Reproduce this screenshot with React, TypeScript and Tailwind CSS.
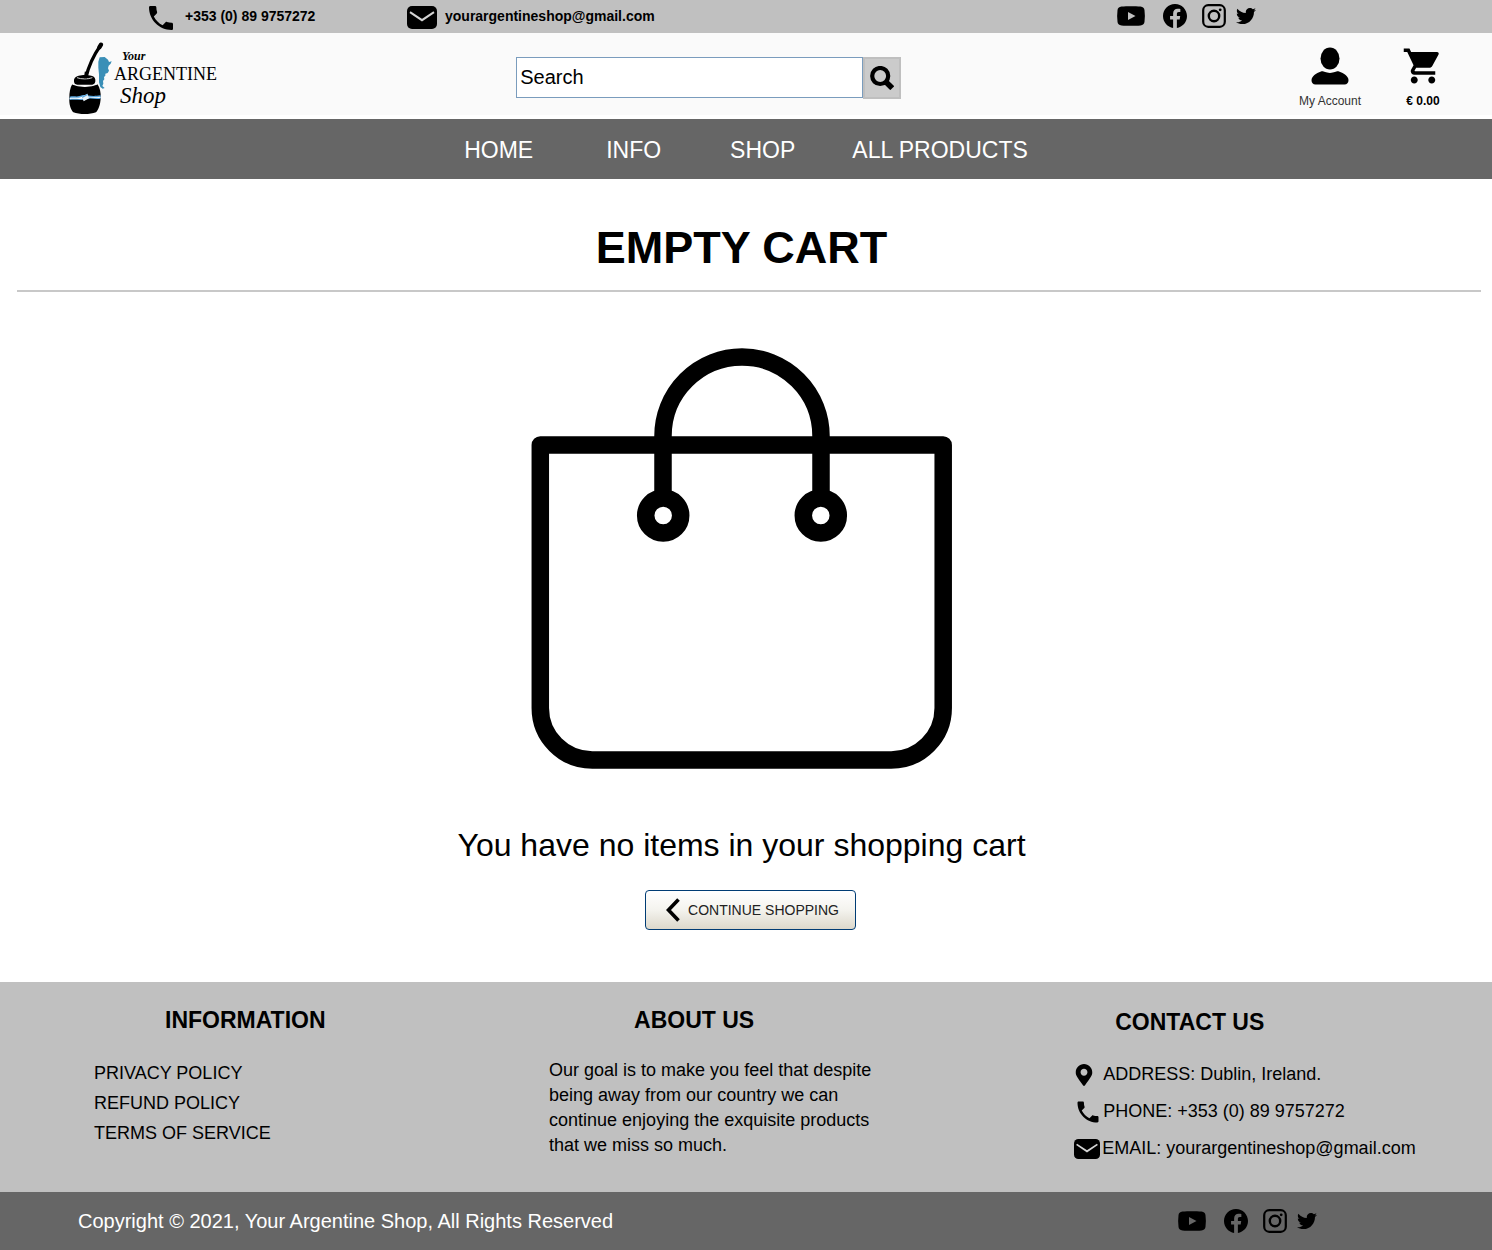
import React from "react";
import { BsFacebook } from "react-icons/bs";
import { FaMapMarkerAlt, FaTwitter } from "react-icons/fa";
import { MdPhone, MdShoppingCart } from "react-icons/md";

function YoutubeIcon() {
  return (
    <svg viewBox="0 0 28 20" className="h-5 w-7" aria-hidden="true">
      <path
        fillRule="evenodd"
        fill="currentColor"
        d="M4.500.6C10 0 18 0 23.500.6c2.600.3 3.800 1.600 4 3.700.5 3.800.5 7.600 0 11.400-.2 2.100-1.400 3.400-4 3.700-5.500.6-13.500.6-19 0-2.600-.3-3.800-1.600-4-3.700-.5-3.800-.5-7.600 0-11.400.2-2.100 1.400-3.400 4-3.700ZM11 6v8l7.500-4Z"
      />
    </svg>
  );
}

function InstagramIcon() {
  return (
    <svg viewBox="0 0 24 24" className="size-6" fill="none" stroke="currentColor" aria-hidden="true">
      <rect x="1.200" y="1.200" width="21.600" height="21.600" rx="5" strokeWidth="2.200" />
      <circle cx="12" cy="12" r="5.200" strokeWidth="2.400" />
      <circle cx="18.200" cy="5.800" r="1.400" fill="currentColor" stroke="none" />
    </svg>
  );
}

function MailIcon({ className }: { className: string }) {
  return (
    <svg viewBox="0 0 30 23" className={className} preserveAspectRatio="none" aria-hidden="true">
      <rect width="30" height="23" rx="5" fill="currentColor" />
      <path d="M3 6.200 15 14.200 27 6.200" fill="none" stroke="#d4d4d4" strokeWidth="2" />
    </svg>
  );
}

function SearchIcon() {
  return (
    <svg viewBox="0 0 24 24" className="size-6" fill="none" stroke="currentColor" aria-hidden="true">
      <circle cx="10.200" cy="10" r="8" strokeWidth="4.200" />
      <path d="m15.500 15.500 6.700 6.700" strokeWidth="5.500" />
    </svg>
  );
}

function PersonIcon() {
  return (
    <svg viewBox="0 0 38 38" className="size-[38px]" fill="#000" aria-hidden="true">
      <ellipse cx="19" cy="11.500" rx="9.500" ry="11" />
      <path d="M10 24.500c2.500-.8 4 1.400 9 1.400s6.500-2.200 9-1.400c5 1.600 9.500 5 9.500 8.700 0 2.500-1.500 4.300-4 4.300h-29C2 37.500.5 35.700.5 33.200c0-3.700 4.500-7.100 9.500-8.700Z" />
    </svg>
  );
}

function BagIcon() {
  return (
    <svg viewBox="0 0 421 421" className="size-[421px]" fill="none" stroke="currentColor" strokeWidth="17.500" aria-hidden="true">
      <path d="M9.300 97h402.900v263a52 52 0 0 1-52 52H61.300a52 52 0 0 1-52-52Z" strokeLinejoin="round" />
      <path d="M132 150V88a79 79 0 0 1 158 0v62" />
      <circle cx="132.200" cy="167.500" r="17.500" />
      <circle cx="289.800" cy="167.500" r="17.500" />
    </svg>
  );
}

function MateIcon() {
  return (
    <svg viewBox="24 12 138 225" className="h-[75px] w-[46px] shrink-0" aria-hidden="true">
      <path d="M123 23c-18 26-36 58-45 98" fill="none" stroke="#000" strokeWidth="10" strokeLinecap="round" />
      <path d="M123 23l-5 8" fill="none" stroke="#000" strokeWidth="13" strokeLinecap="round" />
      <path
        fill="#3a8fb7"
        d="M119 61 134 60 144 68 147 75 155 73 152 80 146 86 144 94 147 101 143 108 136 110 136 116 132 120 133 127 129 132 130 140 127 147 134 153 128 155 121 150 117 136 117 112 115 92 115 74Z"
      />
      <path d="M42 128c2-8 8-11 14-12 10-3 28-3 38 0 7 1 11 5 12 12 1 9-3 14-9 15H50c-6-1-9-7-8-15Z" />
      <path d="M51 122c12 5 34 5 46 0" fill="none" stroke="#fafafa" strokeWidth="2.500" />
      <path d="M79 104 76 124" fill="none" stroke="#000" strokeWidth="9" />
      <path d="M37 141c20 9 55 9 75 0 8 12 11 25 10 43-1 19-6 34-14 42-18 7-50 7-68 0-8-8-13-23-12-42 0-18 2-31 9-43Z" />
      <path d="M37 141c20 9 55 9 75 0" fill="none" stroke="#fafafa" strokeWidth="4" />
      <path d="M29 179c14-3 24 2 37-4 14-4 22 6 56 0v10c-18 4-30-4-42 2-16 4-34-1-51 2Z" fill="#5aa5dc" />
      <path d="M29 183c14-2 24 2 38-4 14-4 22 6 55 0v3c-22 4-34-4-46 2-16 4-30 0-47 2Z" fill="#fff" />
      <path d="m66 179 16-9 5 14-16 9Z" fill="#e7f2fa" />
      <path d="m66 179 16-9 1 4-16 9Z" fill="#5aa5dc" />
    </svg>
  );
}

function SocialLinks() {
  return (
    <div className="flex items-center text-black">
      <a href="#youtube" aria-label="YouTube" className="mr-[18px]">
        <YoutubeIcon />
      </a>
      <a href="#facebook" aria-label="Facebook" className="mr-[15px]">
        <BsFacebook className="size-6" />
      </a>
      <a href="#instagram" aria-label="Instagram" className="mr-2.5">
        <InstagramIcon />
      </a>
      <a href="#twitter" aria-label="Twitter">
        <FaTwitter className="size-5" />
      </a>
    </div>
  );
}

function TopBar() {
  return (
    <div className="flex h-[33px] items-center bg-[#c0c0c0] pr-[236px] pb-0.5 pl-[149px] text-sm font-bold">
      <a href="tel:+353899757272" className="flex w-[258px] items-center gap-2">
        <MdPhone className="-mx-1 mt-1 size-8" />
        <span className="pl-1">+353 (0) 89 9757272</span>
      </a>
      <a href="mailto:yourargentineshop@gmail.com" className="flex items-center gap-2">
        <MailIcon className="mt-1 h-[23px] w-[30px]" />
        <span>yourargentineshop@gmail.com</span>
      </a>
      <div className="ml-auto">
        <SocialLinks />
      </div>
    </div>
  );
}

function Header() {
  return (
    <header className="flex h-[86px] items-center border-b-4 border-white bg-[#fafafa] pt-2">
      <div className="w-[34.6%] pl-[68px]">
        <a href="#home" className="flex w-fit items-center font-['Liberation_Serif',serif] text-black">
          <MateIcon />
          <span className="flex flex-col">
            <span className="pl-2 text-xs/4 font-bold italic">Your</span>
            <span className="text-lg/5">ARGENTINE</span>
            <span className="pl-1.5 text-[23px]/6 italic">Shop</span>
          </span>
        </a>
      </div>
      <form role="search" className="flex w-[25.8%]" onSubmit={(e) => e.preventDefault()}>
        <input
          type="text"
          aria-label="Search"
          placeholder="Search"
          className="h-[41px] min-w-0 flex-1 border border-[#7a9cbd] bg-white px-[3px] text-xl text-black outline-none placeholder:text-black"
        />
        <button
          type="submit"
          aria-label="Submit search"
          className="flex h-[42px] w-[38px] items-center justify-center border-2 border-[#bfbfbf] bg-[#cbcbcb]"
        >
          <SearchIcon />
        </button>
      </form>
      <div className="mr-12 ml-auto flex gap-[41px] text-xs">
        <a href="#account" className="flex flex-col items-center gap-2 text-[#333]">
          <PersonIcon />
          My Account
        </a>
        <a href="#cart" className="flex flex-col items-center gap-2 font-bold">
          <MdShoppingCart className="-my-0.5 size-[42px]" />
          € 0.00
        </a>
      </div>
    </header>
  );
}

function Nav() {
  return (
    <nav className="flex h-[60px] items-center justify-center gap-[57px] bg-[#666] pt-0.5 text-[23px] text-white">
      <a href="#home" className="pr-4">HOME</a>
      <a href="#info" className="pr-3">INFO</a>
      <a href="#shop">SHOP</a>
      <a href="#products">ALL PRODUCTS</a>
    </nav>
  );
}

function EmptyCart() {
  return (
    <main className="flex flex-col items-center bg-white pr-[9px] pb-[52px]">
      <h1 className="mt-11 text-[45px]/[50px] font-bold">EMPTY CART</h1>
      <hr className="mt-[17px] mr-0.5 ml-[17px] self-stretch border-t-2 border-[#c8c8c8]" />
      <div className="mt-14">
        <BagIcon />
      </div>
      <p className="mt-14 text-[32px]/10">You have no items in your shopping cart</p>
      <button
        type="button"
        className="mt-[25px] ml-[18px] flex h-10 w-[211px] items-center justify-center gap-2 rounded-[4px] border border-[#003c74] bg-linear-to-b from-white via-[#f4f3ee] to-[#dcd8cb] pl-1 text-sm text-[#222]"
      >
        <svg viewBox="0 0 14 24" className="h-6 w-3.5" fill="none" stroke="#000" strokeWidth="3.600" aria-hidden="true">
          <path d="M12.500 1.500 2.500 12l10 10.500" />
        </svg>
        CONTINUE SHOPPING
      </button>
    </main>
  );
}

function Footer() {
  return (
    <footer>
      <div className="grid h-[210px] grid-cols-[36.8%_35.2%_28%] bg-[#c0c0c0] text-lg">
        <section className="pt-6 pl-[94px]">
          <h2 className="pl-[71px] text-[23px]/7 font-bold">INFORMATION</h2>
          <ul className="mt-6 leading-[30px]">
            <li><a href="#privacy">PRIVACY POLICY</a></li>
            <li><a href="#refund">REFUND POLICY</a></li>
            <li><a href="#terms">TERMS OF SERVICE</a></li>
          </ul>
        </section>
        <section className="pt-6">
          <h2 className="pl-[85px] text-[23px]/7 font-bold">ABOUT US</h2>
          <p className="mt-6 text-lg/[25px]">
            Our goal is to make you feel that despite
            <br />
            being away from our country we can
            <br />
            continue enjoying the exquisite products
            <br />
            that we miss so much.
          </p>
        </section>
        <section className="pt-[26px]">
          <h2 className="pl-[41px] text-[23px]/7 font-bold">CONTACT US</h2>
          <address className="mt-5 leading-[37px] not-italic">
            <p className="flex items-center">
              <FaMapMarkerAlt className="mr-[9px] h-[22px] w-5" />
              ADDRESS: Dublin, Ireland.
            </p>
            <p className="flex items-center">
              <MdPhone className="mr-px size-7" />
              PHONE: +353 (0) 89 9757272
            </p>
            <p className="flex items-center">
              <MailIcon className="mr-0.5 h-5 w-[26px]" />
              EMAIL: yourargentineshop@gmail.com
            </p>
          </address>
        </section>
      </div>
      <div className="flex h-[58px] items-center justify-between bg-[#666] pr-[175px] pl-[78px] text-xl text-white">
        <p>Copyright © 2021, Your Argentine Shop, All Rights Reserved</p>
        <SocialLinks />
      </div>
    </footer>
  );
}

export default function App() {
  return (
    <div className="min-h-screen bg-white font-['Liberation_Sans',Arial,sans-serif] text-black">
      <TopBar />
      <Header />
      <Nav />
      <EmptyCart />
      <Footer />
    </div>
  );
}
